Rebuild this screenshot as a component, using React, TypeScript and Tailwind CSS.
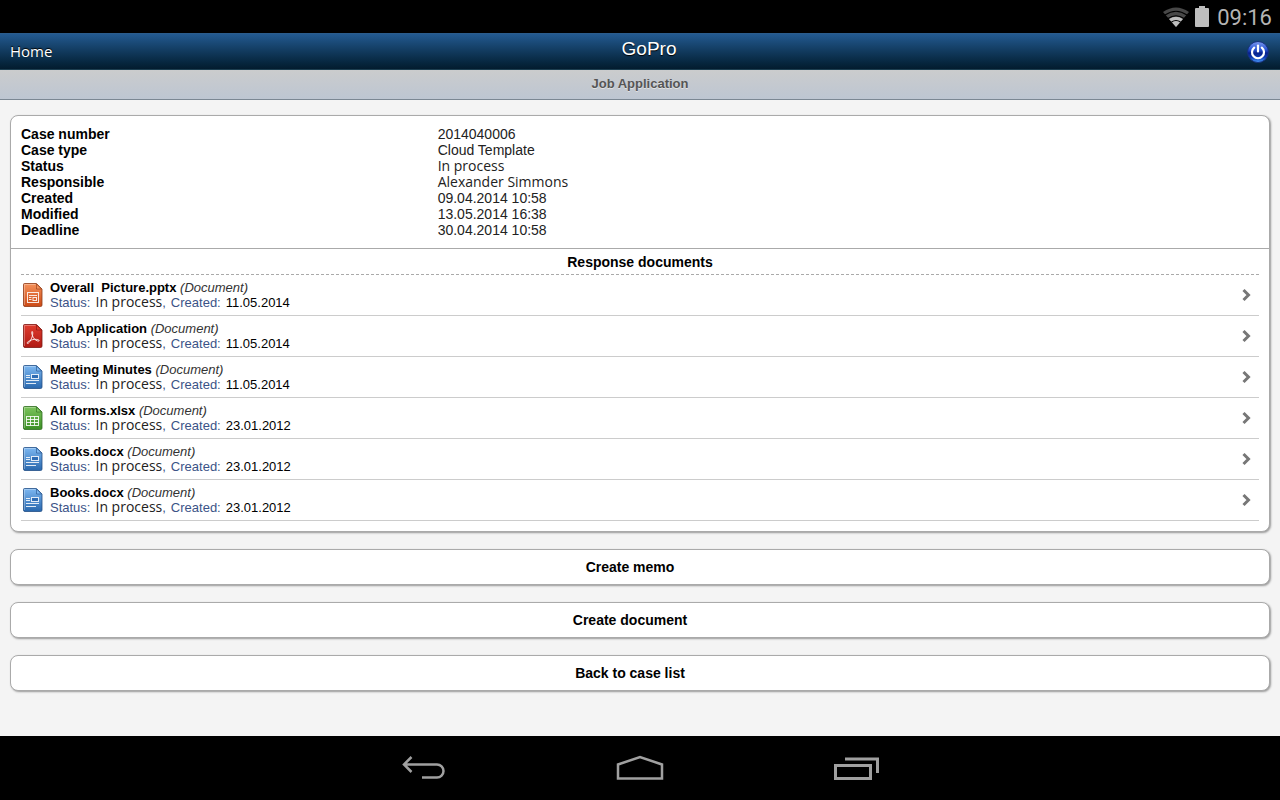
import type { ReactNode } from "react";

type Kind = "pptx" | "pdf" | "docx" | "xlsx";

// Case details, shown at the top of the card
const DETAILS = [
  { label: "Case number", value: "2014040006" },
  { label: "Case type", value: "Cloud Template" },
  { label: "Status", value: "In process", humanist: true },
  { label: "Responsible", value: "Alexander Simmons", humanist: true },
  { label: "Created", value: "09.04.2014 10:58" },
  { label: "Modified", value: "13.05.2014 16:38" },
  { label: "Deadline", value: "30.04.2014 10:58" },
];

const DOCUMENTS: { id: number; name: string; kind: Kind; created: string }[] = [
  { id: 1, name: "Overall  Picture.pptx", kind: "pptx", created: "11.05.2014" },
  { id: 2, name: "Job Application", kind: "pdf", created: "11.05.2014" },
  { id: 3, name: "Meeting Minutes", kind: "docx", created: "11.05.2014" },
  { id: 4, name: "All forms.xlsx", kind: "xlsx", created: "23.01.2012" },
  { id: 5, name: "Books.docx", kind: "docx", created: "23.01.2012" },
  { id: 6, name: "Books.docx", kind: "docx", created: "23.01.2012" },
];

const ACTIONS = ["Create memo", "Create document", "Back to case list"];

// Light, dark and edge colour of each file icon
const KIND_COLORS: Record<Kind, [string, string, string]> = {
  pptx: ["#f5915a", "#cb4a16", "#8f3a17"],
  pdf: ["#e03c2e", "#b01a14", "#7c1813"],
  docx: ["#7db8f2", "#2867ad", "#234f86"],
  xlsx: ["#7cc45c", "#3b8f25", "#2f6c20"],
};

const KIND_GLYPHS: Record<Kind, ReactNode> = {
  pptx: (
    <>
      <rect x="4.5" y="9.5" width="11" height="10" fill="none" />
      <path d="M6 12.5H14 M6 14.5H8.5 M6 16.5H8.5" />
      <rect x="10" y="14.5" width="3.5" height="3" fill="none" />
    </>
  ),
  pdf: (
    <path
      d="M9 7.5C10.4 7.5 9.6 12 8.6 14.2C7.6 16.4 5.8 19.9 4.3 19.4C3 18.7 6.5 16.4 9.8 15.6C12.5 15 16.5 15.4 16.1 16.7C15.5 17.9 11.8 16.1 10.4 13.7C9.2 11.8 8.2 7.9 9 7.5Z"
      fill="none"
    />
  ),
  docx: (
    <>
      <path d="M3 10.5H7 M3 12.5H7 M3 15.5H16 M3 18.5H13" />
      <rect x="8.5" y="9.5" width="7" height="4" fill="#2f6cb3" />
    </>
  ),
  xlsx: (
    <>
      <rect x="3.5" y="10.5" width="12" height="9" fill="none" />
      <path d="M3.5 13.5H15.5 M3.5 16.5H15.5 M7.5 10.5V19.5 M11.5 10.5V19.5" />
    </>
  ),
};

function FileIcon({ kind }: { kind: Kind }) {
  const [light, dark, edge] = KIND_COLORS[kind];
  return (
    <svg width="20" height="24" viewBox="0 0 20 24" className="shrink-0" aria-hidden="true">
      <defs>
        <linearGradient id={`file-${kind}`} x1="0" y1="0" x2="0" y2="1">
          <stop offset="0" stopColor={light} />
          <stop offset="1" stopColor={dark} />
        </linearGradient>
      </defs>
      <path
        d="M1.5 0.5H13.5L19 6V22Q19 23.5 17.5 23.5H2Q0.5 23.5 0.5 22V1.5Q0.5 0.5 1.5 0.5Z"
        fill={`url(#file-${kind})`}
        stroke={edge}
        strokeOpacity="0.8"
      />
      <path d="M13.5 1V6H18.5Z" fill={light} stroke={edge} strokeWidth="0.6" />
      <path d="M1.5 22V1.5H12.5" fill="none" stroke="#fff" strokeOpacity="0.3" />
      <g stroke="#fff" strokeOpacity="0.85">{KIND_GLYPHS[kind]}</g>
    </svg>
  );
}

function StatusBar() {
  return (
    <div className="flex h-[33px] items-center justify-end gap-1.5 bg-black px-2">
      <svg width="26" height="20" viewBox="0 0 26 20" aria-hidden="true">
        <path d="M0 5Q13 -4 26 5L13 20Z" fill="#484848" />
        <path d="M6 12Q13 7.5 20 12L13 20Z" fill="#bebebe" />
        <path d="M2 8Q13 0.5 24 8 M5 11.5Q13 6 21 11.5 M8.5 15Q13 12 17.5 15" fill="none" stroke="#000" strokeWidth="1.2" />
      </svg>
      <svg width="14" height="21" viewBox="0 0 14 21" aria-hidden="true">
        <path d="M4 0H10V2H13Q14 2 14 3V20Q14 21 13 21H1Q0 21 0 20V3Q0 2 1 2H4Z" fill="#bebebe" />
      </svg>
      <span className="ml-0.5 pt-0.5 font-[Roboto] text-[22px] leading-6 text-[#b4b4b4]">09:16</span>
    </div>
  );
}

function PowerIcon() {
  return (
    <svg width="22" height="22" viewBox="0 0 22 22" aria-hidden="true">
      <defs>
        <linearGradient id="power" x1="0" y1="0" x2="0" y2="1">
          <stop offset="0" stopColor="#7d9af0" />
          <stop offset="0.4" stopColor="#2450d0" />
          <stop offset="0.55" stopColor="#06208c" />
          <stop offset="0.75" stopColor="#0c38b0" />
          <stop offset="1" stopColor="#4da0ff" />
        </linearGradient>
      </defs>
      <circle cx="11" cy="11" r="10.5" fill="url(#power)" stroke="#16307c" />
      <path d="M7.2 6.6A6 6 0 1 0 14.8 6.6" fill="none" stroke="#fff" strokeWidth="2.2" strokeLinecap="round" />
      <path d="M11 4.5V10.5" stroke="#fff" strokeWidth="2.2" strokeLinecap="round" />
    </svg>
  );
}

export default function App() {
  return (
    <div className="flex min-h-screen flex-col bg-[#f4f4f4] font-['Liberation_Sans',sans-serif] text-sm text-black">
      <StatusBar />

      {/* Title bar */}
      <header className="grid h-[37px] grid-cols-3 items-center border-t border-b border-t-[#2b5c8c] border-b-[#1c3e50] bg-linear-to-b from-[#235a91] to-[#031c2e] px-2.5 text-white">
        <a href="#home" className="justify-self-start pb-0.5 font-['Open_Sans',sans-serif] text-[15px] leading-5 text-shadow-[0_-1px_1px_#000000]">
          Home
        </a>
        <h1 className="pb-1.5 pl-[18px] text-center text-[19px] leading-6 text-shadow-[0_1px_1px_#000000]">GoPro</h1>
        <button type="button" aria-label="Log out" className="justify-self-end pr-px">
          <PowerIcon />
        </button>
      </header>

      <h2 className="flex h-[30px] items-center justify-center border-b border-[#7b8793] bg-linear-to-b from-[#cbcccd] to-[#bdc6d2] text-[13px] font-bold text-[#555555] text-shadow-[0_1px_0_#e2e2e2]">
        Job Application
      </h2>

      <main className="flex flex-1 flex-col gap-[17px] px-2.5 pt-[15px] pb-11">
        <section className="rounded-lg border border-[#aaaaaa] bg-white pb-2.5 shadow-[1px_1px_2px_#999999]">
          <dl className="grid grid-cols-[1fr_2fr] gap-x-1.5 border-b border-[#aaaaaa] p-2.5 leading-4">
            {DETAILS.map((item) => (
              <div key={item.label} className="contents">
                <dt className="font-bold">{item.label}</dt>
                <dd className={item.humanist ? "font-['Open_Sans',sans-serif] text-[#222222]" : "text-[#222222]"}>
                  {item.value}
                </dd>
              </div>
            ))}
          </dl>

          <div className="px-2.5">
            <h3 className="border-b border-dashed border-[#aaaaaa] pt-[5px] pb-[3px] text-center leading-[17px] font-bold">
              Response documents
            </h3>
            <ul>
              {DOCUMENTS.map((doc) => (
                <li key={doc.id} className="border-b border-[#cccccc]">
                  <a href={`#document-${doc.id}`} className="flex items-center py-[5px] pr-2 pl-0.5 text-[13px] leading-[15px]">
                    <FileIcon kind={doc.kind} />
                    <div className="ml-[7px] flex-1">
                      <p>
                        <b className="whitespace-pre">{doc.name}</b> <i className="text-[#333333]">(Document)</i>
                      </p>
                      <p>
                        <span className="mr-[5px] text-[#3b5387]">Status:</span>
                        <span className="font-['Open_Sans',sans-serif] text-sm leading-none text-[#222222]">In process</span>
                        <span className="mr-[5px] text-[#3b5387]">,</span>
                        <span className="mr-[5px] text-[#3b5387]">Created:</span>
                        {doc.created}
                      </p>
                    </div>
                    <svg width="9" height="14" viewBox="0 0 9 14" aria-hidden="true">
                      <path d="M1.5 2L6.5 7L1.5 12" fill="none" stroke="#777" strokeWidth="3" />
                    </svg>
                  </a>
                </li>
              ))}
            </ul>
          </div>
        </section>

        {ACTIONS.map((label) => (
          <button
            key={label}
            type="button"
            className="h-9 shrink-0 rounded-lg border border-[#aaaaaa] bg-white pr-5 font-bold shadow-[1px_1px_2px_#999999]"
          >
            {label}
          </button>
        ))}
      </main>

      {/* System navigation */}
      <nav className="flex h-16 items-center justify-center bg-black">
        <button type="button" aria-label="Back" className="flex w-[216px] justify-center">
          <svg width="44" height="26" viewBox="0 0 44 26" fill="none" stroke="#a0a0a0" strokeWidth="2.5" aria-hidden="true">
            <path d="M9.5 2L2 9.5L9.5 17 M2 9.5H35A6.5 6.5 0 0 1 35 22.5H20" />
          </svg>
        </button>
        <button type="button" aria-label="Home screen" className="flex w-[216px] justify-center">
          <svg width="48" height="26" viewBox="0 0 48 26" fill="none" stroke="#a0a0a0" strokeWidth="2.5" aria-hidden="true">
            <path d="M2 9.5L24 2L46 9.5V23.5H2Z" />
          </svg>
        </button>
        <button type="button" aria-label="Recent apps" className="flex w-[216px] justify-center">
          <svg width="46" height="26" viewBox="0 0 46 26" fill="none" stroke="#a0a0a0" strokeWidth="3" aria-hidden="true">
            <path d="M2.5 10.5H37.5V23.5H2.5Z M12 4H44.5V18" />
          </svg>
        </button>
      </nav>
    </div>
  );
}
